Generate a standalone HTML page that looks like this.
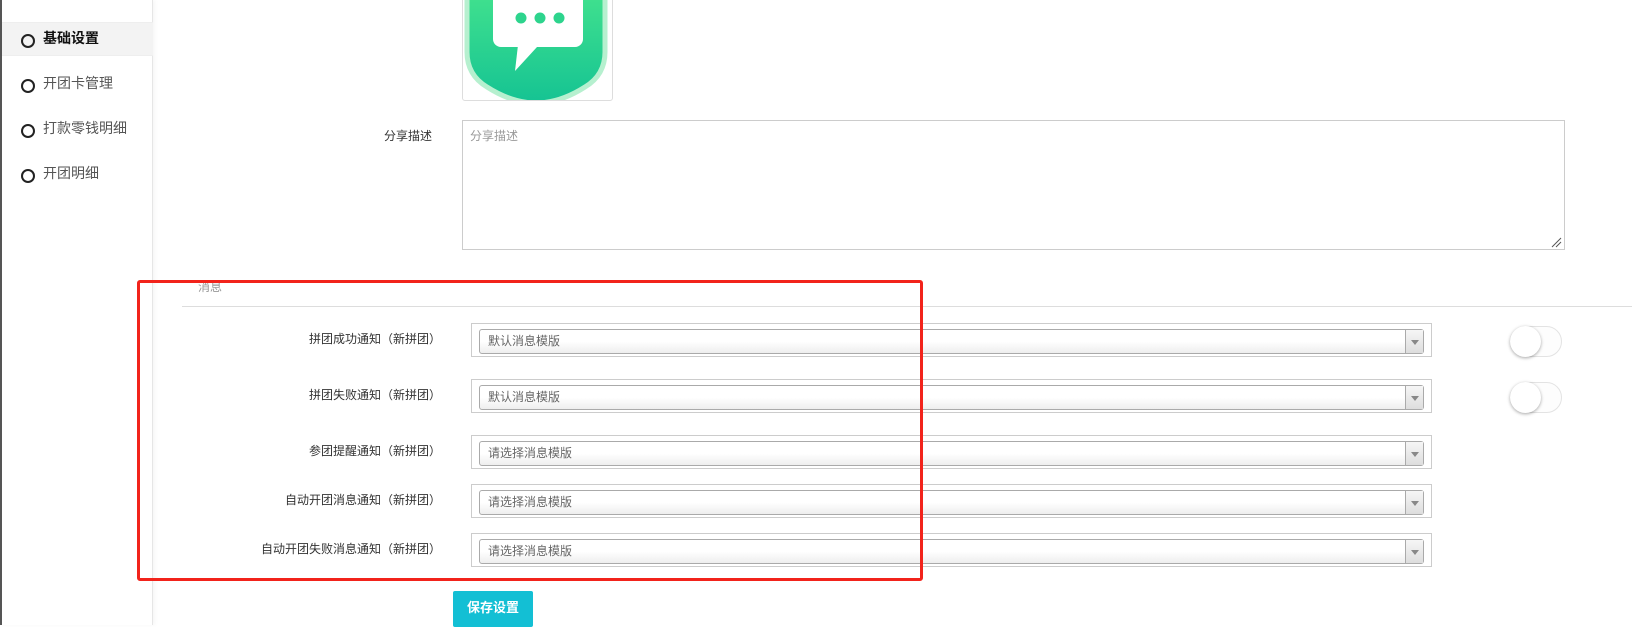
<!DOCTYPE html>
<html><head><meta charset="utf-8"><style>
*{box-sizing:border-box;margin:0;padding:0}
body{width:1632px;height:625px;overflow:hidden;background:#fff;font-family:"Liberation Sans","Noto Sans CJK SC",sans-serif;position:relative}
.abs{position:absolute}
.side{left:0;top:0;width:153px;height:625px;background:#fff;border-right:1px solid #e6e6e6;box-shadow:2px 0 4px rgba(0,0,0,.04)}
.strip{left:0;top:0;width:2px;height:625px;background:#555}
.item{left:2px;width:151px;height:33px;font-size:14px;color:#555;line-height:33px;padding-left:41px}
.item:before{content:"";position:absolute;left:19px;top:12px;width:10px;height:10px;border:2px solid #222;border-radius:50%}
.lbl{font-size:12px;color:#333;text-align:right;width:300px}
.outer{left:471px;width:961px;height:34px;border:1px solid #ccc}
.inner{position:absolute;left:7px;top:5px;right:7px;height:25px;border:1px solid #aaa;border-radius:3px;background:linear-gradient(#fff 50%,#eee);font-size:12px;color:#666;line-height:23px;padding-left:8px}
.arr{position:absolute;right:0;top:0;width:18px;height:23px;border-left:1px solid #aaa;background:linear-gradient(#f6f6f6,#ddd)}
.arr:after{content:"";position:absolute;left:5px;top:10px;border:4px solid transparent;border-top:5px solid #888;border-bottom:0}
.tog{left:1510px;width:52px;height:31px;border:1px solid #e3e3e3;border-radius:16px;background:#fdfdfd}
.tog:after{content:"";position:absolute;left:-1px;top:-1px;width:31px;height:31px;border-radius:50%;background:#fff;box-shadow:0 1px 3px rgba(0,0,0,.35)}
</style></head><body>
<div class="abs side"></div>
<div class="abs strip"></div>
<div class="abs" style="left:2px;top:22px;width:151px;height:34px;background:#f3f3f3;border-top:1px solid #eee;border-bottom:1px solid #eee"></div>
<div class="abs item" style="top:22px;color:#111;font-weight:bold">基础设置</div>
<div class="abs item" style="top:67px">开团卡管理</div>
<div class="abs item" style="top:112px">打款零钱明细</div>
<div class="abs item" style="top:157px">开团明细</div>

<div class="abs" style="left:462px;top:-4px;width:151px;height:105px;border:1px solid #ddd;border-radius:3px;overflow:hidden">
<svg width="151" height="105" viewBox="0 0 151 105"><defs><linearGradient id="g" x1="0" y1="0" x2="0" y2="1"><stop offset="0" stop-color="#3fe08e"/><stop offset="1" stop-color="#15c393"/></linearGradient></defs>
<path d="M4 0 L142 0 L142 55 Q142 78 122 90 Q97 106 73 106 Q49 106 24 90 Q4 78 4 55 Z" fill="url(#g)" stroke="#b6f0cf" stroke-width="5"/>
<rect x="30" y="-12" width="90" height="62" rx="8" fill="#fff"/>
<path d="M55 48 L52 74 L74 50 Z" fill="#fff"/>
<circle cx="58" cy="21" r="5.5" fill="#2dd48d"/><circle cx="77" cy="21" r="5.5" fill="#2dd48d"/><circle cx="96" cy="21" r="5.5" fill="#2dd48d"/>
</svg></div>

<div class="abs lbl" style="left:132px;top:127px">分享描述</div>
<div class="abs" style="left:462px;top:120px;width:1103px;height:130px;border:1px solid #ccc;font-size:12px;color:#999;padding:6px 7px">分享描述</div>
<svg class="abs" style="left:1550px;top:236px" width="12" height="12"><path d="M2 11L11 2M6 11L11 6" stroke="#555" stroke-width="1"/></svg>

<div class="abs" style="left:198px;top:278px;font-size:12px;color:#999">消息</div>
<div class="abs" style="left:182px;top:306px;width:1450px;height:1px;background:#ddd"></div>

<div class="abs lbl" style="left:135px;top:330px;left:141px">拼团成功通知（新拼团）</div>
<div class="abs outer" style="top:323px"><div class="inner">默认消息模版<div class="arr"></div></div></div>
<div class="abs tog" style="top:326px"></div>

<div class="abs lbl" style="left:141px;top:386px">拼团失败通知（新拼团）</div>
<div class="abs outer" style="top:379px"><div class="inner">默认消息模版<div class="arr"></div></div></div>
<div class="abs tog" style="top:382px"></div>

<div class="abs lbl" style="left:141px;top:442px">参团提醒通知（新拼团）</div>
<div class="abs outer" style="top:435px"><div class="inner">请选择消息模版<div class="arr"></div></div></div>

<div class="abs lbl" style="left:141px;top:491px">自动开团消息通知（新拼团）</div>
<div class="abs outer" style="top:484px"><div class="inner">请选择消息模版<div class="arr"></div></div></div>

<div class="abs lbl" style="left:141px;top:540px">自动开团失败消息通知（新拼团）</div>
<div class="abs outer" style="top:533px"><div class="inner">请选择消息模版<div class="arr"></div></div></div>

<div class="abs" style="left:137px;top:280px;width:786px;height:301px;border:3.5px solid #f2231b;border-radius:3px"></div>

<div class="abs" style="left:453px;top:591px;width:80px;height:36px;background:#13bfd4;color:#fff;font-size:13px;font-weight:bold;text-align:center;line-height:34px;border-radius:2px">保存设置</div>
</body></html>
